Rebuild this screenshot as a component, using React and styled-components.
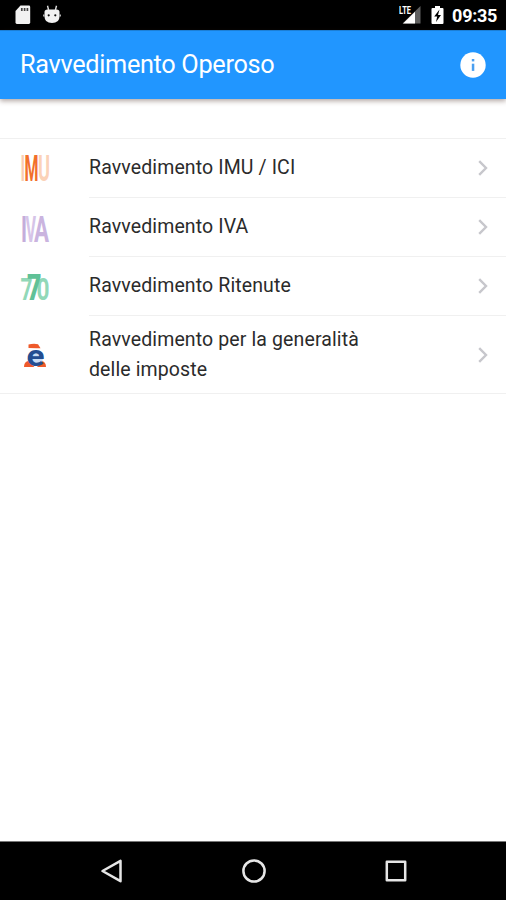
import styled, { createGlobalStyle } from "styled-components";

const items = [
  { label: "Ravvedimento IMU / ICI", Icon: ImuIcon },
  { label: "Ravvedimento IVA", Icon: IvaIcon },
  { label: "Ravvedimento Ritenute", Icon: RitenuteIcon },
  { label: "Ravvedimento per la generalità delle imposte", Icon: AgencyIcon, tall: true },
];

export default function App() {
  return (
    <Screen>
      <GlobalStyle />
      <StatusBar>
        <StatusGroup>
          <SdCardIcon />
          <DroidIcon />
        </StatusGroup>
        <StatusGroup>
          <SignalIcon />
          <BatteryIcon />
          <Clock>09:35</Clock>
        </StatusGroup>
      </StatusBar>

      <Header>
        <Title>Ravvedimento Operoso</Title>
        <InfoButton aria-label="Info">
          <svg width="26" height="26" viewBox="0 0 26 26">
            <circle cx="13" cy="13" r="12.7" fill="#fff" />
            <rect x="11.8" y="7" width="2.5" height="2.4" fill="#4a9ff0" />
            <rect x="11.8" y="11.7" width="2.5" height="7.2" fill="#4a9ff0" />
          </svg>
        </InfoButton>
      </Header>

      <List>
        {items.map(({ label, Icon, tall }) => (
          <Row key={label}>
            <IconBox>
              <Icon />
            </IconBox>
            <RowContent $tall={tall}>
              <Label>{label}</Label>
              <Chevron width="10" height="16" viewBox="0 0 10 16">
                <path d="M1.2 1.2 8 8l-6.8 6.8" />
              </Chevron>
            </RowContent>
          </Row>
        ))}
      </List>

      <NavBar>
        <NavButton aria-label="Back">
          <svg width="24" height="26" viewBox="0 0 24 26">
            <path d="M20.5 2.8v20.4L2.5 13z" />
          </svg>
        </NavButton>
        <NavButton aria-label="Home">
          <svg width="26" height="26" viewBox="0 0 26 26">
            <circle cx="13" cy="13" r="10.6" />
          </svg>
        </NavButton>
        <NavButton aria-label="Recents">
          <svg width="26" height="26" viewBox="0 0 26 26">
            <rect x="3.8" y="3.8" width="18.4" height="18.4" />
          </svg>
        </NavButton>
      </NavBar>
    </Screen>
  );
}

function SdCardIcon() {
  return (
    <svg width="16" height="20" viewBox="0 0 16 20">
      <path d="M5.5.5h8.3q1.4 0 1.4 1.4v15.7q0 1.4-1.4 1.4H1.9Q.5 19 .5 17.6V6z" fill="#f2f2f2" />
      <path d="M6.8 3v3M9.6 3v3M12.4 3v3" stroke="#444" strokeWidth="1.7" />
    </svg>
  );
}

function DroidIcon() {
  return (
    <svg width="18" height="20" viewBox="0 0 18 20">
      <path d="M4.5.8 5.6 5M13.5.8 12.4 5" stroke="#ddd" strokeWidth="1.4" />
      <path d="M1.5 7q0-2.5 3-2.5h9q3 0 3 2.5v4.500q0 6.500-7.500 6.500T1.500 11.500z" fill="#f2f2f2" />
      <path d="M.8 9.500v2M17.200 9.500v2" stroke="#ddd" strokeWidth="1.2" />
      <circle cx="5.7" cy="10.3" r="1.1" fill="#111" />
      <circle cx="12.3" cy="10.3" r="1.1" fill="#111" />
    </svg>
  );
}

function SignalIcon() {
  return (
    <svg width="23" height="20" viewBox="0 0 23 20">
      <path d="M21.5 1v17.500H3.500z" fill="#606060" />
      <path d="M16 6.800v11.700H4z" fill="#fff" />
      <rect width="12" height="9.5" />
      <text x="0" y="8.8" textLength="12" lengthAdjust="spacingAndGlyphs">LTE</text>
    </svg>
  );
}

function BatteryIcon() {
  return (
    <svg width="14" height="20" viewBox="0 0 14 20">
      <path d="M4 1h5v2h2.500q1 0 1 1v14q0 1-1 1H1.500q-1 0-1-1V4q0-1 1-1H4z" fill="#fff" />
      <path d="M8.500 4.500 3.200 11.500h3L5 17l5-7H7z" fill="#000" />
    </svg>
  );
}

function Letter({ children, x, y = 27, width, fill, $size, $bold }) {
  return (
    <LetterText x={x} y={y} textLength={width} lengthAdjust="spacingAndGlyphs" fill={fill} $size={$size} $bold={$bold}>
      {children}
    </LetterText>
  );
}

function ImuIcon() {
  return (
    <Logo width="28" height="30" viewBox="0 0 28 30">
      <Letter x={-0.5} width={4.5} fill="#fbcdb2">I</Letter>
      <Letter x={17} width={12} fill="#fbd2b8">U</Letter>
      <Letter x={3.5} width={14} fill="#f2702b">M</Letter>
    </Logo>
  );
}

function IvaIcon() {
  return (
    <Logo width="28" height="30" viewBox="0 0 28 30">
      <Letter x={0} y={28.5} width={6} fill="#c5addb">I</Letter>
      <Letter x={4.5} y={28.5} width={10.5} fill="#d6c4e8">V</Letter>
      <Letter x={13} y={28.5} width={15} fill="#cab4df">A</Letter>
    </Logo>
  );
}

function RitenuteIcon() {
  return (
    <Logo width="28" height="30" viewBox="0 0 28 30">
      <Letter x={-0.5} y={27.5} width={12} fill="#91d8b8" $size={32}>7</Letter>
      <Letter x={15.5} y={27.5} width={13} fill="#91d8b8" $size={32}>0</Letter>
      <g transform="translate(6 28)">
        <Letter x={0} y={0} width={14.5} fill="#5fc197" $size={37} $bold>7</Letter>
      </g>
    </Logo>
  );
}

function AgencyIcon() {
  return (
    <Logo width="28" height="30" viewBox="0 0 28 30">
      <path d="M7.500 4.500q5-1.200 9.500-.3l2.500 4h-4L7.500 8z" fill="#ef5a2a" />
      <path d="M7 21q-4 1-4 6h10.500L7 21zM21 21q4 1 4 6h-9z" fill="#ef5a2a" />
      <circle cx="14.500" cy="18" r="7.500" fill="#c9dcf5" />
      <Letter x={5.500} y={26} width={18} fill="#244d91" $size={29}>e</Letter>
    </Logo>
  );
}

const GlobalStyle = createGlobalStyle`
  * {
    box-sizing: border-box;
  }
  body {
    margin: 0;
    background: #fff;
    font-family: Roboto, sans-serif;
  }
`;

const Screen = styled.div`
  display: flex;
  flex-direction: column;
  width: 100%;
  height: 900px;
  overflow: hidden;
`;

const StatusBar = styled.div`
  display: flex;
  justify-content: space-between;
  align-items: center;
  height: 30px;
  padding: 0 9px 0 15px;
  background: #000;
  color: #fff;
`;
const StatusGroup = styled.div`
  display: flex;
  align-items: center;
  gap: 12px;
  & + & {
    gap: 9px;
  }
  svg text {
    font-size: 10.5px;
    font-weight: 700;
    fill: #fff;
  }
`;
const Clock = styled.span`
  font-size: 18px;
  font-weight: 700;
  letter-spacing: -0.3px;
  line-height: 30px;
  padding-top: 2px;
  margin-left: -2px;
`;

const Header = styled.header`
  display: flex;
  justify-content: space-between;
  align-items: center;
  flex-shrink: 0;
  height: 69px;
  padding: 0 20px;
  background: #2196ff;
  border-top: 1px solid #1c7fd6;
  box-shadow: 0 2px 5px rgba(60, 30, 20, 0.4);
`;
const Title = styled.h1`
  margin: 0;
  padding-bottom: 1px;
  color: #fff;
  font-size: 25.3px;
  font-weight: 400;
  letter-spacing: -0.33px;
`;
const InfoButton = styled.button`
  display: flex;
  padding: 0;
  border: 0;
  background: none;
`;

const List = styled.ul`
  flex: 1;
  list-style: none;
  margin: 39px 0 0;
  padding: 0;
  border-top: 1px solid #f0f0f0;
`;
const Row = styled.li`
  display: flex;
  &:last-child {
    border-bottom: 1px solid #f0f0f0;
  }
`;
const IconBox = styled.div`
  display: flex;
  align-items: center;
  width: 89px;
  padding-left: 21px;
`;
const RowContent = styled.div`
  display: flex;
  flex: 1;
  align-items: center;
  justify-content: space-between;
  height: ${({ $tall }) => ($tall ? "77px" : "59px")};
  padding-right: 18px;
  border-bottom: ${({ $tall }) => ($tall ? "0" : "1px solid #f0f0f0")};
`;
const Label = styled.span`
  width: 290px;
  color: #2b2b2b;
  font-size: 19.5px;
  line-height: 29.5px;
  letter-spacing: 0.12px;
`;
const Chevron = styled.svg`
  fill: none;
  stroke: #c7c7cc;
  stroke-width: 2.4;
`;

const Logo = styled.svg`
  overflow: visible;
`;
const LetterText = styled.text`
  font-family: Roboto, sans-serif;
  font-size: ${({ $size }) => $size || 36}px;
  font-weight: ${({ $bold }) => ($bold ? 900 : 700)};
`;

const NavBar = styled.nav`
  display: flex;
  justify-content: space-between;
  align-items: center;
  height: 59px;
  padding: 0 97px 0 100px;
  background: #000;
  border-top: 1px solid #777;
`;
const NavButton = styled.button`
  display: flex;
  padding: 0;
  border: 0;
  background: none;
  svg {
    fill: none;
    stroke: #e6e6e6;
    stroke-width: 2.5;
    stroke-linejoin: round;
  }
`;
